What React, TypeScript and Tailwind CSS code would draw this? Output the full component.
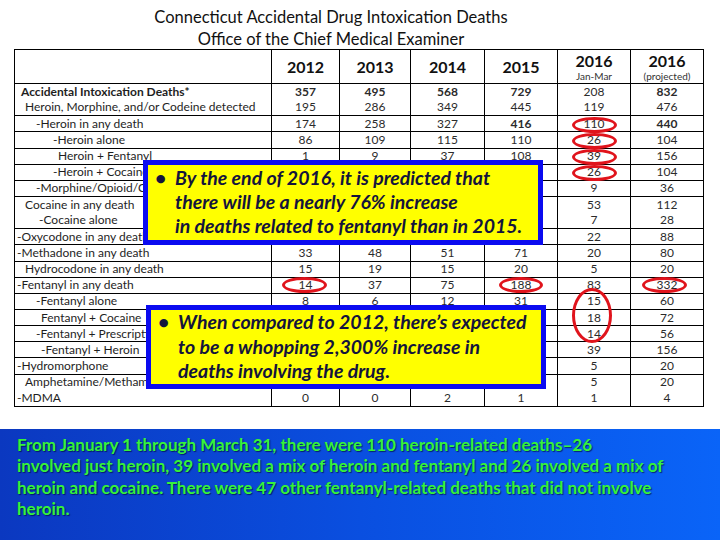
type Row = {
  label: string
  pad: string
  vals: string[]
  bold?: number[]
  boldLabel?: boolean
  line: boolean
}

// cells left empty sit under the yellow callouts
const rows: Row[] = [
  { label: 'Accidental Intoxication Deaths*', pad: 'pl-[6px]', vals: ['357', '495', '568', '729', '208', '832'], bold: [0, 1, 2, 3, 5], boldLabel: true, line: false },
  { label: 'Heroin, Morphine, and/or Codeine detected', pad: 'pl-[10px]', vals: ['195', '286', '349', '445', '119', '476'], line: true },
  { label: '-Heroin in any death', pad: 'pl-[21px]', vals: ['174', '258', '327', '416', '110', '440'], bold: [3, 5], line: true },
  { label: '-Heroin alone', pad: 'pl-[38px]', vals: ['86', '109', '115', '110', '26', '104'], line: true },
  { label: 'Heroin + Fentanyl', pad: 'pl-[43px]', vals: ['1', '9', '37', '108', '39', '156'], line: true },
  { label: '-Heroin + Cocaine', pad: 'pl-[38px]', vals: ['', '', '', '', '26', '104'], line: true },
  { label: '-Morphine/Opioid/Codeine in any death', pad: 'pl-[21px]', vals: ['', '', '', '', '9', '36'], line: true },
  { label: 'Cocaine in any death', pad: 'pl-[10px]', vals: ['', '', '', '', '53', '112'], line: false },
  { label: '-Cocaine alone', pad: 'pl-[24px]', vals: ['', '', '', '', '7', '28'], line: true },
  { label: '-Oxycodone in any death', pad: 'pl-[2px]', vals: ['', '', '', '', '22', '88'], line: true },
  { label: '-Methadone in any death', pad: 'pl-[2px]', vals: ['33', '48', '51', '71', '20', '80'], line: true },
  { label: 'Hydrocodone in any death', pad: 'pl-[10px]', vals: ['15', '19', '15', '20', '5', '20'], line: true },
  { label: '-Fentanyl in any death', pad: 'pl-[2px]', vals: ['14', '37', '75', '188', '83', '332'], line: true },
  { label: '-Fentanyl alone', pad: 'pl-[21px]', vals: ['8', '6', '12', '31', '15', '60'], line: true },
  { label: 'Fentanyl + Cocaine', pad: 'pl-[26px]', vals: ['', '', '', '', '18', '72'], line: true },
  { label: '-Fentanyl + Prescription Opioids', pad: 'pl-[21px]', vals: ['', '', '', '', '14', '56'], line: true },
  { label: '-Fentanyl + Heroin', pad: 'pl-[26px]', vals: ['', '', '', '', '39', '156'], line: true },
  { label: '-Hydromorphone', pad: 'pl-[2px]', vals: ['', '', '', '', '5', '20'], line: true },
  { label: 'Amphetamine/Methamphetamine', pad: 'pl-[10px]', vals: ['', '', '', '', '5', '20'], line: false },
  { label: '-MDMA', pad: 'pl-[2px]', vals: ['0', '0', '2', '1', '1', '4'], line: false },
]

const years = ['2012', '2013', '2014', '2015']

function Ring({ cls }: { cls: string }) {
  return <div className={`absolute rounded-[50%] border-[3px] border-[#e0141c] ${cls}`} />
}

export default function App() {
  return (
    <div className="w-[720px] h-[540px] bg-white overflow-hidden flex flex-col font-['Lato','Liberation_Sans',sans-serif] text-[#1e1e1e]">
      <div className="w-[662px] pt-[6px] text-center text-[16.5px] leading-[22px] text-[#111]">
        <div>Connecticut Accidental Drug Intoxication Deaths</div>
        <div>Office of the Chief Medical Examiner</div>
      </div>

      <div className="relative ml-[14px] mt-[-1px] w-[689px]">
        <table className="w-[689px] table-fixed border-collapse border border-black text-[12px] leading-none">
          <colgroup>
            <col className="w-[257px]" />
            <col className="w-[68px]" />
            <col className="w-[71px]" />
            <col className="w-[74px]" />
            <col className="w-[73px]" />
            <col className="w-[73px]" />
            <col className="w-[73px]" />
          </colgroup>
          <thead>
            <tr className="h-[34px] border-b border-black">
              <th className="border-r border-black" />
              {years.map((y) => (
                <th key={y} className="border-r border-black text-[16px] font-bold text-[#111]">{y}</th>
              ))}
              <th className="border-r border-black font-bold text-[#111]">
                <div className="text-[16px] leading-[18px]">2016</div>
                <div className="text-[10px] font-normal leading-[12px] text-[#333]">Jan-Mar</div>
              </th>
              <th className="font-bold text-[#111]">
                <div className="text-[16px] leading-[18px]">2016</div>
                <div className="text-[10px] font-normal leading-[12px] text-[#333]">(projected)</div>
              </th>
            </tr>
          </thead>
          <tbody>
            {rows.map((r, i) => (
              <tr key={i} className={`h-[16.15px] ${r.line ? 'border-b border-black' : ''}`}>
                <td className={`border-r border-black whitespace-nowrap overflow-hidden ${r.pad} ${r.boldLabel ? 'font-bold' : ''}`}>{r.label}</td>
                {r.vals.map((v, j) => (
                  <td
                    key={j}
                    className={`text-center text-[#2b2b2b] ${j < 5 ? 'border-r border-black' : ''} ${r.bold?.includes(j) ? 'font-bold' : ''}`}
                  >
                    {v}
                  </td>
                ))}
              </tr>
            ))}
          </tbody>
        </table>

        <Ring cls="left-[558px] top-[68px] w-[45px] h-[16px]" />
        <Ring cls="left-[558px] top-[84px] w-[45px] h-[16px]" />
        <Ring cls="left-[558px] top-[100px] w-[45px] h-[16px]" />
        <Ring cls="left-[558px] top-[116px] w-[45px] h-[16px]" />
        <Ring cls="left-[268px] top-[228px] w-[45px] h-[16px]" />
        <Ring cls="left-[485px] top-[228px] w-[44px] h-[16px]" />
        <Ring cls="left-[628px] top-[228px] w-[45px] h-[16px]" />
        <Ring cls="left-[558px] top-[239px] w-[40px] h-[55px]" />

        <div className="absolute left-[129px] top-[111px] w-[400px] h-[85px] bg-[#ffff00] border-[5px] border-[#0b0bf0] pt-[1px] flex text-[19.5px] leading-[24px] font-bold italic text-[#14143c] whitespace-nowrap">
          <span className="w-[27px] pl-[7px] not-italic">•</span>
          <div>
            <div>By the end of 2016, it is predicted that</div>
            <div>there will be a nearly 76% increase</div>
            <div>in deaths related to fentanyl than in 2015.</div>
          </div>
        </div>

        <div className="absolute left-[132px] top-[256px] w-[400px] h-[84px] bg-[#ffff00] border-[5px] border-[#0b0bf0] pt-[0px] flex text-[19.5px] leading-[24.5px] font-bold italic text-[#14143c] whitespace-nowrap">
          <span className="w-[27px] pl-[7px] not-italic">•</span>
          <div>
            <div>When compared to 2012, there’s expected</div>
            <div>to be a whopping 2,300% increase in</div>
            <div>deaths involving the drug.</div>
          </div>
        </div>
      </div>

      <div className="mt-[22px] flex-1 bg-gradient-to-r from-[#0b38c0] via-[#0a4fe0] to-[#0a64f8] pl-[17px] pt-[5px] text-[17px] leading-[21.5px] font-bold text-[#36f23a] whitespace-nowrap [text-shadow:1px_1px_1px_rgba(0,0,40,0.6)]">
        <div>From January 1 through March 31, there were 110 heroin-related deaths–26</div>
        <div>involved just heroin, 39 involved a mix of heroin and fentanyl and 26 involved a mix of</div>
        <div>heroin and cocaine. There were 47 other fentanyl-related deaths that did not involve</div>
        <div>heroin.</div>
      </div>
    </div>
  )
}
